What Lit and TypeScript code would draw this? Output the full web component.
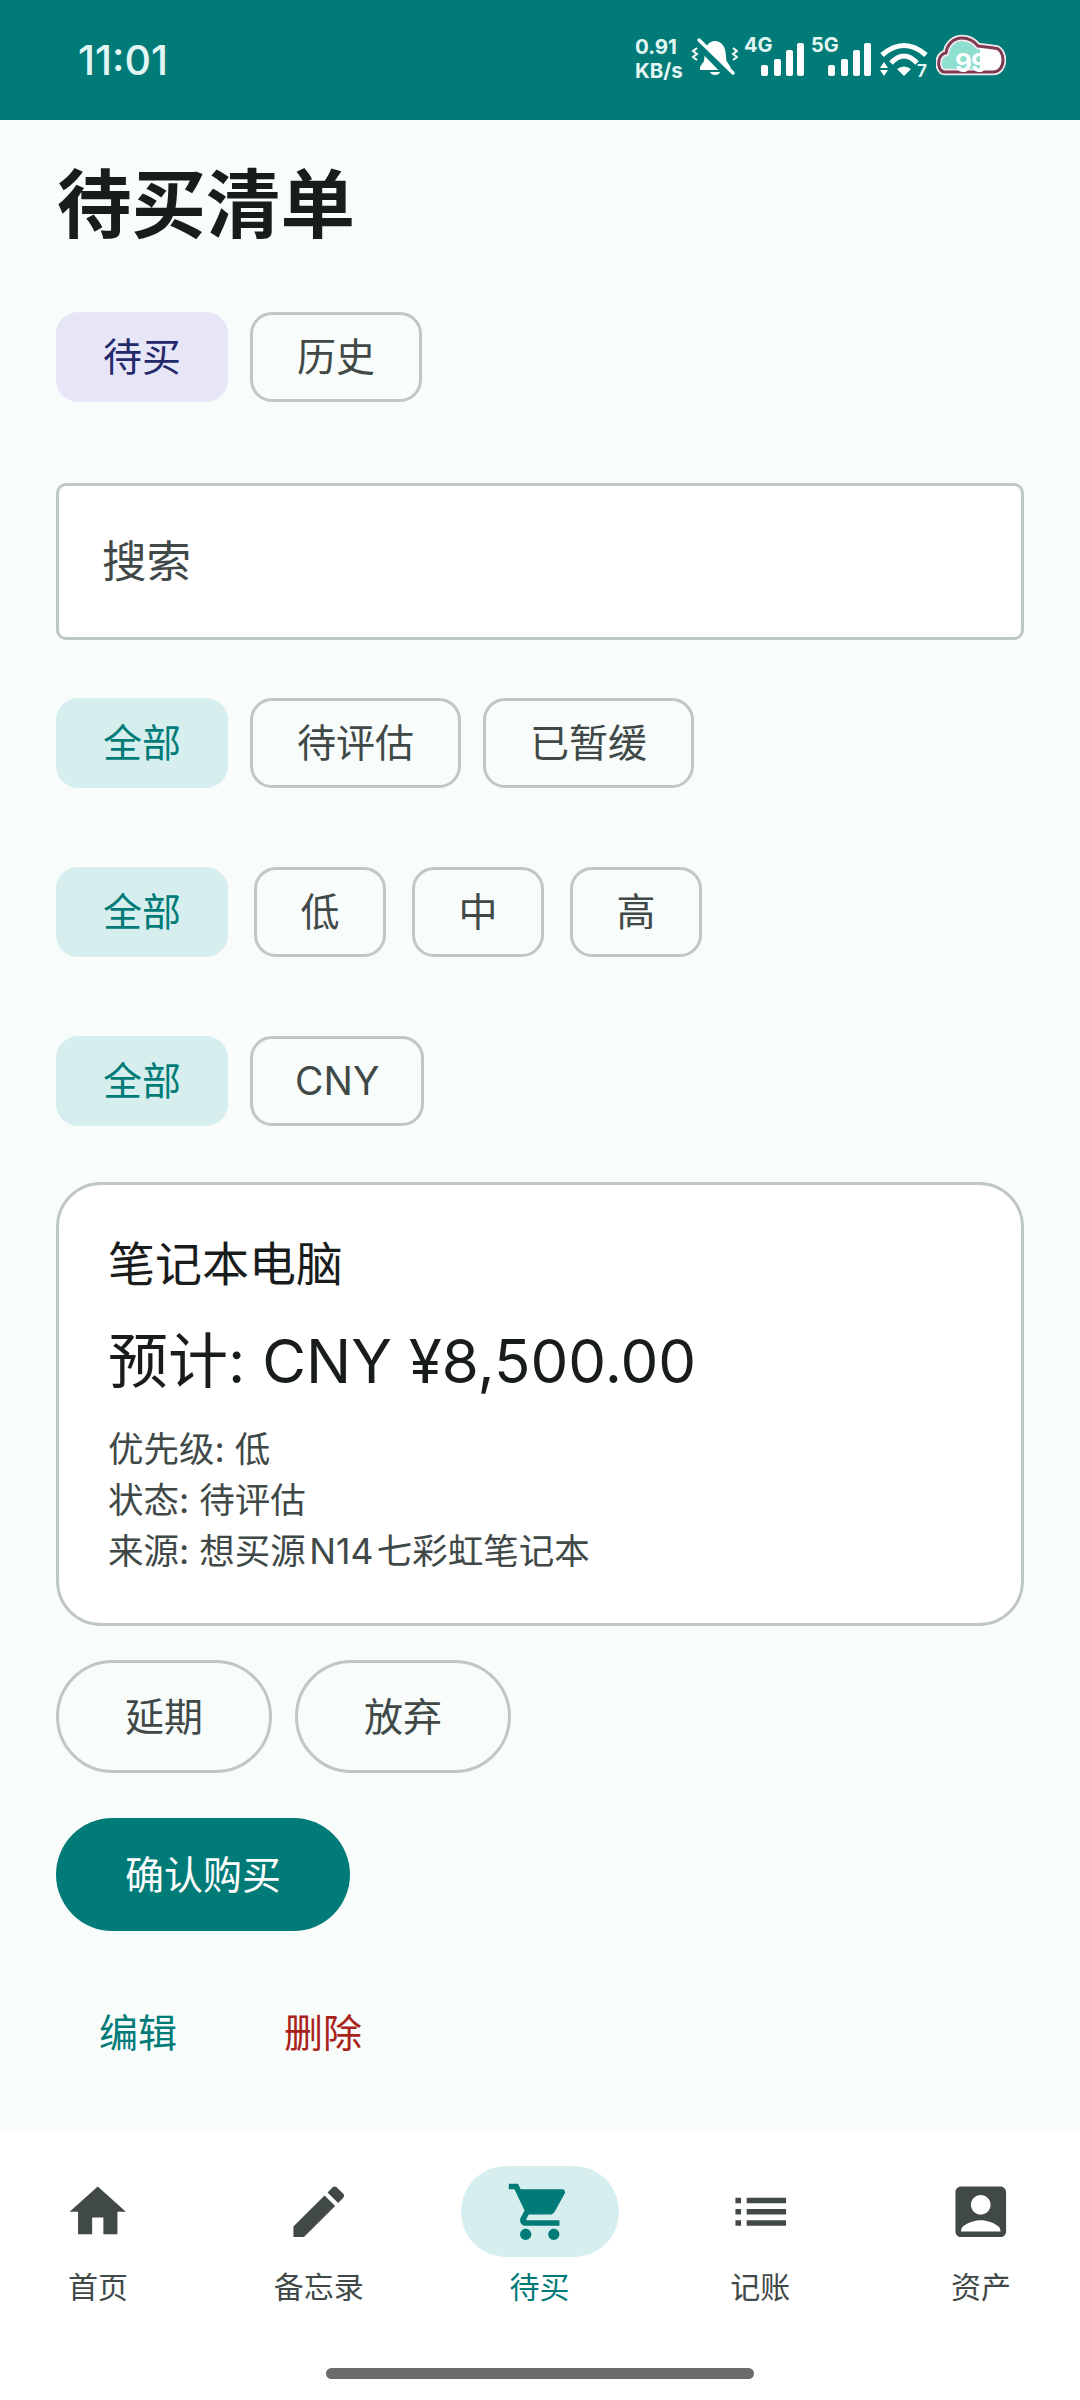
import { LitElement, html, css, svg } from "lit";
import { customElement } from "lit/decorators.js";

const ICONS: Record<string, string> = {
  home: "M10 20v-6h4v6h5v-8h3L12 3 2 12h3v8z",
  edit: "M3 17.25V21h3.75L17.81 9.94l-3.75-3.75L3 17.25zM20.71 7.04c.39-.39.39-1.02 0-1.41l-2.34-2.34c-.39-.39-1.02-.39-1.41 0l-1.83 1.83 3.75 3.75 1.83-1.83z",
  cart: "M7 18c-1.1 0-1.99.9-1.99 2S5.9 22 7 22s2-.9 2-2-.9-2-2-2zM1 2v2h2l3.6 7.59-1.35 2.45c-.16.28-.25.61-.25.96 0 1.1.9 2 2 2h12v-2H7.42c-.14 0-.25-.11-.25-.25l.03-.12.9-1.63h7.45c.75 0 1.41-.41 1.75-1.03l3.58-6.47c.08-.14.12-.31.12-.48 0-.55-.45-1-1-1H5.21l-.94-2H1zm16 16c-1.1 0-1.99.9-1.99 2s.89 2 1.99 2 2-.9 2-2-.9-2-2-2z",
  list: "M3 13h2v-2H3v2zm0 4h2v-2H3v2zm0-8h2V7H3v2zm4 4h14v-2H7v2zm0 4h14v-2H7v2zM7 7v2h14V7H7z",
  box: "M19 3H5c-1.11 0-2 .9-2 2v14c0 1.1.89 2 2 2h14c1.1 0 2-.9 2-2V5c0-1.1-.9-2-2-2zm-7 3c1.93 0 3.5 1.57 3.5 3.5S13.93 13 12 13s-3.5-1.57-3.5-3.5S10.07 6 12 6zm7 13H5v-.23c0-.62.28-1.2.76-1.58C7.47 15.82 9.64 15 12 15s4.53.82 6.24 2.19c.48.38.76.97.76 1.58V19z",
};

const NAV = [
  { label: "首页", icon: "home" },
  { label: "备忘录", icon: "edit" },
  { label: "待买", icon: "cart", active: true },
  { label: "记账", icon: "list" },
  { label: "资产", icon: "box" },
];

const CLOUD = "M9 39C3 39 2 31 3 27 4 22 8 20 10 20 11 11 18 5 26 5 33 5 38 8 42 13L58 15C64 15 67 21 67 27 67 34 63 39 57 39Z";

const bars = (label: string) => html`
  <div class="sig">
    <span class="siglabel">${label}</span>
    <svg width="66" height="44" viewBox="0 0 66 44">
      <rect x="18" y="29" width="7" height="11" rx="2"/>
      <rect x="31" y="23" width="7" height="17" rx="2"/>
      <rect x="43" y="14" width="7" height="26" rx="2"/>
      <rect x="54" y="7" width="7" height="33" rx="2"/>
    </svg>
  </div>`;

@customElement("app-root")
export class AppRoot extends LitElement {
  static styles = css`
    :host {
      display: flex;
      flex-direction: column;
      width: 1080px;
      height: 2400px;
      background: #f8fcfb;
      font-family: Inter, "Noto Sans CJK SC", sans-serif;
      color: #404947;
      overflow: hidden;
    }
    .status {
      height: 120px;
      flex: none;
      background: #017b78;
      color: #e2f6f4;
      display: flex;
      align-items: flex-start;
      box-sizing: border-box;
      padding: 34px 0 0 78px;
    }
    .time { font-size: 41px; line-height: 48px; font-weight: 500; width: 557px; margin-top: 2px; }
    .net { font-size: 20.5px; line-height: 24px; font-weight: 700; width: 55px; white-space: nowrap; margin-top: -1px; }
    .stat-icons { display: flex; align-items: flex-start; padding-top: 2px; }
    .stat-icons svg { display: block; }
    .bell { margin-right: 5px; }
    .sig { position: relative; fill: #fff; margin-right: 1px; }
    .siglabel { position: absolute; left: 1px; top: -1px; font-size: 20px; line-height: 20px; font-weight: 700; color: #e2f6f4; }
    .wifi { position: relative; margin-left: 3px; margin-right: 8px; }
    .seven { position: absolute; left: 37px; top: 26px; font-size: 17px; line-height: 18px; font-weight: 700; color: #e2f6f4; }
    .cloud { position: relative; margin-top: -3px; }
    .nines { position: absolute; left: 19px; top: 15px; font-size: 26px; line-height: 30px; font-weight: 700; color: #fff; letter-spacing: -1px; }

    main { flex: 1; padding: 0 56px; min-height: 0; }
    h1 {
      margin: 37px 0 0 1px;
      font-size: 74.5px;
      line-height: 96px;
      font-weight: 700;
      color: #191c1c;
    }
    .row { display: flex; gap: 22px; }
    .tabs { margin-top: 59px; }
    .chip {
      box-sizing: border-box;
      height: 90px;
      padding: 0 44px;
      border: 3px solid #bfc8c6;
      border-radius: 22px;
      font-size: 39px;
      line-height: 84px;
      color: #404947;
      white-space: nowrap;
    }
    .chip.sel { border-color: transparent; background: #d6efee; color: #017b78; }
    .chip.tab { border-color: transparent; background: #e6e6f7; color: #24296b; }
    .search {
      box-sizing: border-box;
      margin-top: 81px;
      height: 157px;
      border: 3px solid #bfc8c6;
      border-radius: 10px;
      background: #fff;
      padding-left: 43px;
      font-size: 44.5px;
      line-height: 153px;
      color: #404947;
    }
    .f1 { margin-top: 58px; }
    .f2, .f3 { margin-top: 79px; }
    .f2 { gap: 26px; }
    .f2 .level { padding: 0 43.5px; }
    .f3 .code { padding: 0 42px; }
    .card {
      box-sizing: border-box;
      margin-top: 56px;
      height: 444px;
      border: 3px solid #bfc8c6;
      border-radius: 45px;
      background: #fff;
      padding: 47px 49px 0;
    }
    .name { font-size: 47px; line-height: 64px; color: #191c1c; }
    .price { margin-top: 23px; font-size: 60px; line-height: 84px; color: #191c1c; white-space: nowrap; }
    .meta { margin-top: 21px; font-size: 35.5px; line-height: 51px; color: #404947; }
    .latin { margin: 0 3.5px; }
    .actions { margin-top: 34px; gap: 23px; }
    .btn {
      box-sizing: border-box;
      height: 113px;
      width: 216px;
      border: 3px solid #bfc8c6;
      border-radius: 57px;
      font-size: 39px;
      line-height: 107px;
      text-align: center;
      color: #404947;
    }
    .confirm {
      margin-top: 45px;
      width: 294px;
      height: 113px;
      border-radius: 57px;
      background: #017b78;
      color: #fff;
      font-size: 39px;
      line-height: 113px;
      text-align: center;
    }
    .links { margin-top: 75px; padding-left: 43px; gap: 107px; font-size: 39px; line-height: 54px; }
    .edit { color: #017b78; }
    .del { color: #a8231c; }

    nav {
      flex: none;
      height: 270px;
      box-sizing: border-box;
      background: #fff;
      padding-top: 36px;
    }
    .items { display: flex; justify-content: space-between; padding: 0 20px 0 19px; }
    .item { width: 158px; display: flex; flex-direction: column; align-items: center; font-size: 30px; line-height: 42px; color: #404947; }
    .pill { width: 158px; height: 91px; border-radius: 46px; display: flex; align-items: center; justify-content: center; margin-bottom: 9px; }
    .pill svg { fill: #404947; display: block; }
    .item.on { color: #017b78; }
    .item.on .pill { background: #d6efee; }
    .item.on .pill svg { fill: #017b78; }
    .handle { width: 428px; height: 11px; border-radius: 6px; background: #6b6b6b; margin: 60px auto 0; }
  `;

  render() {
    return html`
      <div class="status">
        <div class="time">11:01</div>
        <div class="stat-icons">
          <div class="net"><div>0.91</div><div>KB/s</div></div>
          <svg class="bell" width="48" height="44" viewBox="0 0 48 44">
            <path fill="#fff" d="M25 5c6 0 10 5 10.5 11l1 9 4 6v3H10v-3l4-6 1-9C15.500 10 19 5 25 5z"/>
            <path fill="#fff" d="M20 36h10c-1 4-9 4-10 0z"/>
            <path fill="none" stroke="#017b78" stroke-width="7" d="M7 7l34 35"/>
            <path fill="none" stroke="#fff" stroke-width="3.4" stroke-linecap="round" d="M9 4l34 33"/>
            <path fill="none" stroke="#fff" stroke-width="2" d="M7 12l-4 3 4 3-4 3 4 3M43 12l4 3-4 3 4 3-4 3"/>
          </svg>
          ${bars("4G")}
          ${bars("5G")}
          <div class="wifi">
            <svg width="48" height="44" viewBox="0 0 48 44">
              <g fill="none" stroke="#fff" stroke-width="5">
                <path d="M2 19Q24 0 46 19"/>
                <path d="M11 27Q24 13 37 27"/>
              </g>
              <path fill="#fff" d="M17 33Q24 28 31 33L24 40z"/>
              <path fill="#fff" d="M0 32l4-6 4 6zM0 34h8l-4 6z"/>
            </svg>
            <span class="seven">7</span>
          </div>
          <div class="cloud">
            <svg width="70" height="44" viewBox="0 0 70 44">
              <path fill="#8fdfd0" stroke="#f4e9ee" stroke-width="6.500" stroke-linejoin="round" d=${CLOUD}/>
              <path fill="#fff" d="M44 14L58 15C64 15 67 21 67 27 67 34 63 39 57 39H44Z"/>
              <path fill="none" stroke="#7d3a50" stroke-width="3" stroke-linejoin="round" d=${CLOUD}/>
            </svg>
            <span class="nines">99</span>
          </div>
        </div>
      </div>
      <main>
        <h1>待买清单</h1>
        <div class="row tabs"><div class="chip tab">待买</div><div class="chip">历史</div></div>
        <div class="search">搜索</div>
        <div class="row f1"><div class="chip sel">全部</div><div class="chip">待评估</div><div class="chip">已暂缓</div></div>
        <div class="row f2"><div class="chip sel">全部</div><div class="chip level">低</div><div class="chip level">中</div><div class="chip level">高</div></div>
        <div class="row f3"><div class="chip sel">全部</div><div class="chip code">CNY</div></div>
        <div class="card">
          <div class="name">笔记本电脑</div>
          <div class="price">预计: CNY ¥8,500.00</div>
          <div class="meta">
            <div>优先级: 低</div>
            <div>状态: 待评估</div>
            <div>来源: 想买源<span class="latin">N14</span>七彩虹笔记本</div>
          </div>
        </div>
        <div class="row actions"><div class="btn">延期</div><div class="btn">放弃</div></div>
        <div class="confirm">确认购买</div>
        <div class="row links"><div class="edit">编辑</div><div class="del">删除</div></div>
      </main>
      <nav>
        <div class="items">
          ${NAV.map(
            (n) => html`<div class="item ${n.active ? "on" : ""}">
              <div class="pill">
                <svg width="67.5" height="67.5" viewBox="0 0 24 24">${svg`<path d=${ICONS[n.icon]}></path>`}</svg>
              </div>
              <div>${n.label}</div>
            </div>`
          )}
        </div>
        <div class="handle"></div>
      </nav>
    `;
  }
}
